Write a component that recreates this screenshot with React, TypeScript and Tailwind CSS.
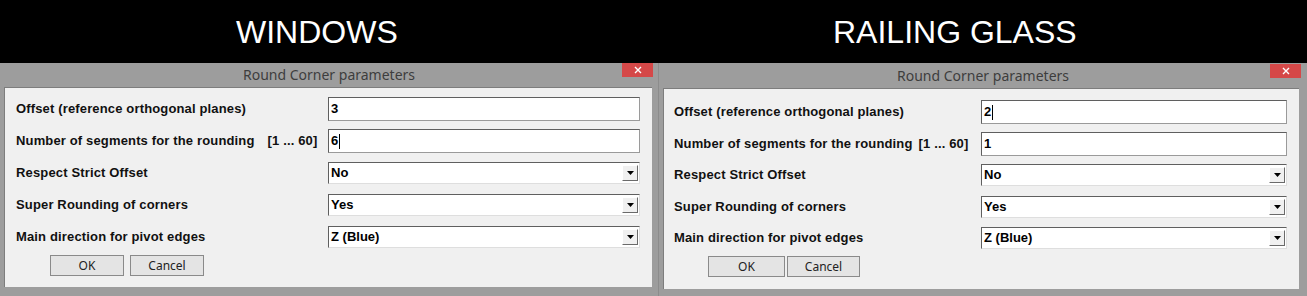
import React from "react";

type Cfg = {
  root: string;
  title: string;
  close: string;
  inner: string;
  rows: string;
  label: string;
  field: string;
  segGap: string;
  buttons: string;
  ok: string;
  cancel: string;
};

function DownBtn() {
  return (
    <div className="py-[2px] pr-[1px] flex">
      <div className="h-full w-[16px] flex items-center justify-center bg-[#f0f0f0] border border-t-white border-l-white border-b-[#6a6a6a] border-r-[#6a6a6a]">
        <svg width="7" height="4" viewBox="0 0 7 4">
          <path d="M0 0 H7 L3.5 4 Z" fill="#000" />
        </svg>
      </div>
    </div>
  );
}

function InputBox({ value, caret, field }: { value: string; caret?: boolean; field: string }) {
  return (
    <div
      className={`${field} h-[24px] flex items-center bg-white border border-t-[#5f5f5f] border-l-[#5f5f5f] border-b-[#9a9a9a] border-r-[#9a9a9a] pl-[2px] text-[13px] font-bold text-black`}
    >
      <span>{value}</span>
      {caret && <span className="ml-[1px] inline-block w-px h-[15px] bg-black" />}
    </div>
  );
}

function SelectBox({ value, field }: { value: string; field: string }) {
  return (
    <div
      className={`${field} h-[22px] flex items-stretch bg-white border border-t-[#5f5f5f] border-l-[#5f5f5f] border-b-[#dedede] border-r-[#dedede]`}
    >
      <div className="flex-1 flex items-center pl-[2px] text-[13px] font-bold text-black">{value}</div>
      <DownBtn />
    </div>
  );
}

function Dialog({ c, values, caretIdx }: { c: Cfg; values: string[]; caretIdx: number }) {
  const labelCls = `${c.label} text-[13px] font-bold text-[#111] tracking-[0.15px]`;
  return (
    <div className={`${c.root} h-full bg-[#9d9d9d] flex flex-col`}>
      <div className={`${c.title} relative flex items-center justify-center shrink-0`}>
        <span className="text-[14px] text-[#3d3d3d] font-['Noto_Sans',sans-serif] leading-none">
          Round Corner parameters
        </span>
        <div className={`${c.close} absolute w-[31px] h-[14px] bg-[#d54848] flex items-center justify-center`}>
          <svg width="8" height="8" viewBox="0 0 8 8">
            <path d="M1 1 L7 7 M7 1 L1 7" stroke="#fff" strokeWidth="1.4" />
          </svg>
        </div>
      </div>
      <div className={`${c.inner} bg-[#f0f0f0] border-t border-l border-[#7d7d7d] flex flex-col`}>
        <div className={`${c.rows} flex flex-col`}>
          <div className="h-[24px] flex items-center">
            <div className={labelCls}>Offset (reference orthogonal planes)</div>
            <InputBox value={values[0]} caret={caretIdx === 0} field={c.field} />
          </div>
          <div className="h-[24px] flex items-center">
            <div className={`${labelCls} flex`}>
              <span>Number of segments for the rounding</span>
              <span className={c.segGap}>[1 ... 60]</span>
            </div>
            <InputBox value={values[1]} caret={caretIdx === 1} field={c.field} />
          </div>
          <div className="h-[24px] flex items-center">
            <div className={labelCls}>Respect Strict Offset</div>
            <SelectBox value="No" field={c.field} />
          </div>
          <div className="h-[24px] flex items-center">
            <div className={labelCls}>Super Rounding of corners</div>
            <SelectBox value="Yes" field={c.field} />
          </div>
          <div className="h-[24px] flex items-center">
            <div className={labelCls}>Main direction for pivot edges</div>
            <SelectBox value="Z (Blue)" field={c.field} />
          </div>
        </div>
        <div className={`${c.buttons} flex`}>
          <div
            className={`${c.ok} h-[21px] flex items-center justify-center bg-[#e4e4e4] border border-[#8a8a8a] text-[12px] text-[#222] font-['Noto_Sans',sans-serif]`}
          >
            OK
          </div>
          <div
            className={`${c.cancel} h-[21px] flex items-center justify-center bg-[#e4e4e4] border border-[#8a8a8a] text-[12px] text-[#222] font-['Noto_Sans',sans-serif]`}
          >
            Cancel
          </div>
        </div>
      </div>
    </div>
  );
}

const leftCfg: Cfg = {
  root: "w-[658px]",
  title: "h-[24px]",
  close: "right-[5px] top-0",
  inner: "ml-[4px] w-[648px] h-[200px] pl-[11px] pt-[9px]",
  rows: "gap-[8px]",
  label: "w-[312px]",
  field: "w-[312px]",
  segGap: "ml-[13px]",
  buttons: "mt-[6px] pl-[34px] gap-[6px]",
  ok: "w-[74px]",
  cancel: "w-[74px]",
};

const rightCfg: Cfg = {
  root: "w-[648px]",
  title: "h-[25px]",
  close: "right-[6px] top-[1px]",
  inner: "ml-[4px] w-[636px] h-[201px] pl-[10px] pt-[11px]",
  rows: "gap-[7.5px]",
  label: "w-[307px]",
  field: "w-[306px]",
  segGap: "ml-[6px]",
  buttons: "mt-[6px] pl-[34px] gap-[2px]",
  ok: "w-[77px]",
  cancel: "w-[73px]",
};

export default function App() {
  return (
    <div className="w-[1307px] h-[296px] overflow-hidden bg-[#9d9d9d] font-['Liberation_Sans',Arial,sans-serif]">
      <div className="h-[63px] bg-black flex items-center text-white text-[32px] leading-none">
        <div className="w-[658px] pl-[236px]">WINDOWS</div>
        <div className="pl-[175px]">RAILING GLASS</div>
      </div>
      <div className="flex h-[233px]">
        <Dialog c={leftCfg} values={["3", "6"]} caretIdx={1} />
        <div className="w-px h-full bg-[#8c8c8c]" />
        <Dialog c={rightCfg} values={["2", "1"]} caretIdx={0} />
      </div>
    </div>
  );
}
